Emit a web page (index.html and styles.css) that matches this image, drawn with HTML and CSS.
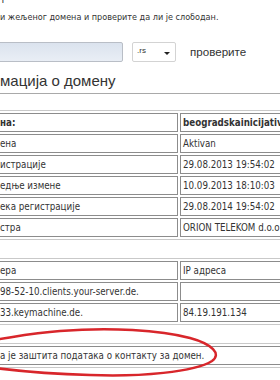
FILE: index.html
```html
<!DOCTYPE html>
<html lang="sr">

<head>
    <meta charset="utf-8">
    <title>Информација о домену</title>
    <link rel="stylesheet" href="styles.css">
</head>

<body>
    <div class="page">
        <p class="title">т</p>
        <p class="intro">и жељеног домена и проверите да ли је слободан.</p>

        <form class="search">
            <input class="domain-input" type="text" name="domain" />
            <div class="tld-select">
                <span class="tld-value">.rs</span>
                <span class="caret"></span>
            </div>
            <span class="check">проверите</span>
        </form>

        <h2 class="section-title">мација о домену</h2>

        <table class="info">
            <tr>
                <th class="label">на:</th>
                <th>beogradskainicijativa.rs</th>
            </tr>
            <tr>
                <td class="label">ена</td>
                <td>Aktivan</td>
            </tr>
            <tr>
                <td class="label">истрације</td>
                <td>29.08.2013 19:54:02</td>
            </tr>
            <tr>
                <td class="label">едње измене</td>
                <td>10.09.2013 18:10:03</td>
            </tr>
            <tr>
                <td class="label">ека регистрације</td>
                <td>29.08.2014 19:54:02</td>
            </tr>
            <tr>
                <td class="label">стра</td>
                <td>ORION TELEKOM d.o.o.</td>
            </tr>
        </table>

        <table class="info">
            <tr>
                <td class="label">ера</td>
                <td>IP адреса</td>
            </tr>
            <tr>
                <td class="label">98-52-10.clients.your-server.de.</td>
                <td></td>
            </tr>
            <tr>
                <td class="label">33.keymachine.de.</td>
                <td>84.19.191.134</td>
            </tr>
        </table>

        <table class="info">
            <tr>
                <td>а је заштита података о контакту за домен.</td>
            </tr>
        </table>
    </div>

    <!-- hand drawn marker round the notice -->
    <svg class="mark" width="280" height="380" viewBox="0 0 280 380">
        <path d="M -20 342 C 10 338, 30 333, 60 331 C 110 327, 160 330, 190 338 C 212 344, 222 354, 212 361 C 195 372, 140 377, 90 375 C 50 374, 15 371, -20 366" fill="none" stroke="#d8262b" stroke-width="2.5" stroke-linecap="round" />
    </svg>
</body>

</html>
```

FILE: styles.css
```css
body {
    margin: 0;
    width: 280px;
    height: 380px;
    overflow: hidden;
    position: relative;
    background: #fff;
    color: #333;
    font-family: "DejaVu Sans Condensed", "DejaVu Sans", sans-serif;
}

.page {
    width: 600px;
    margin-left: -6px;
}

.title {
    margin: -6px 0 0 6px;
    font-size: 11px;
    line-height: 12px;
}

.intro {
    margin: 5px 0 0 6px;
    font-size: 9px;
    line-height: 12px;
}

.search {
    display: flex;
    align-items: center;
    margin-top: 18px;
    height: 21px;
}

.domain-input {
    box-sizing: border-box;
    width: 129px;
    height: 20px;
    margin: 0;
    border: 1px solid #b9bec6;
    border-radius: 0 2px 2px 0;
    background: linear-gradient(#dbe3ee, #e9eef5);
}

.tld-select {
    box-sizing: border-box;
    position: relative;
    width: 44px;
    height: 20px;
    margin: 1px 0 0 9px;
    border: 1px solid #d3d3d3;
    border-radius: 2px;
    background: #fff;
}

.tld-value {
    position: absolute;
    left: 4px;
    top: 3px;
    font-family: "Liberation Sans", sans-serif;
    font-size: 8px;
}

.caret {
    position: absolute;
    right: 5px;
    top: 9px;
    border-left: 3px solid transparent;
    border-right: 3px solid transparent;
    border-top: 3px solid #222;
}

.check {
    margin-left: 14px;
    font-family: "Liberation Sans", sans-serif;
    font-size: 11.6px;
    color: #333;
}

.section-title {
    margin: 10px 0 0 6px;
    padding-bottom: 3px;
    border-bottom: 1px solid #a9a9a9;
    font-family: "Liberation Sans", sans-serif;
    font-size: 15px;
    font-weight: normal;
    line-height: 18px;
}

.info {
    table-layout: fixed;
    width: 600px;
    margin-top: 16px;
    border: 1px solid #c9c9c9;
    border-spacing: 2px;
    font-size: 9.7px;
}

.info + .info {
    margin-top: 18px;
}

.info th,
.info td {
    height: 17px;
    padding: 0 2px;
    border: 1px solid #8c8c8c;
    text-align: left;
    white-space: nowrap;
    overflow: hidden;
    font-weight: normal;
}

.info th {
    font-weight: bold;
}

.info .label {
    width: 175px;
}

.mark {
    position: absolute;
    top: 0;
    left: 0;
    pointer-events: none;
}
```
